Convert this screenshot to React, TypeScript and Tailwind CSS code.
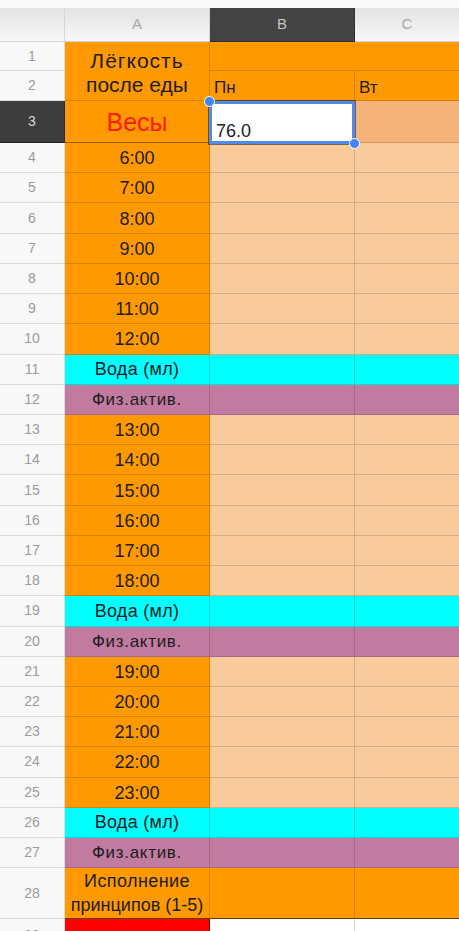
import React from 'react';

type CellProps = {
  bg: string;
  children?: React.ReactNode;
  className?: string;
};

const Cell = ({ bg, children, className = '' }: CellProps) => (
  <div className={`${bg} border-r border-b border-black/15 flex overflow-hidden text-[#1c1c1c] ${className}`}>
    {children}
  </div>
);

const Num = ({ n, dark = false, className = '' }: { n: number; dark?: boolean; className?: string }) => (
  <div
    className={`border-r border-b flex justify-center text-[14px] ${
      dark ? 'bg-[#3d3d3d] text-[#d8d8d8] border-[#2a2a2a]' : 'bg-[#f8f8f8] text-[#9b9b9b] border-[#dcdcdc]'
    } ${className}`}
  >
    {n}
  </div>
);

type Row =
  | { kind: 'time'; label: string }
  | { kind: 'water' }
  | { kind: 'phys' };

const body: Row[] = [
  { kind: 'time', label: '6:00' },
  { kind: 'time', label: '7:00' },
  { kind: 'time', label: '8:00' },
  { kind: 'time', label: '9:00' },
  { kind: 'time', label: '10:00' },
  { kind: 'time', label: '11:00' },
  { kind: 'time', label: '12:00' },
  { kind: 'water' },
  { kind: 'phys' },
  { kind: 'time', label: '13:00' },
  { kind: 'time', label: '14:00' },
  { kind: 'time', label: '15:00' },
  { kind: 'time', label: '16:00' },
  { kind: 'time', label: '17:00' },
  { kind: 'time', label: '18:00' },
  { kind: 'water' },
  { kind: 'phys' },
  { kind: 'time', label: '19:00' },
  { kind: 'time', label: '20:00' },
  { kind: 'time', label: '21:00' },
  { kind: 'time', label: '22:00' },
  { kind: 'time', label: '23:00' },
  { kind: 'water' },
  { kind: 'phys' },
];

export default function App() {
  return (
    <div
      className="w-[459px] h-[931px] overflow-hidden bg-white"
      style={{ fontFamily: '"Liberation Sans", Arial, sans-serif' }}
    >
      {/* top strip */}
      <div className="h-[8px] bg-[#f9f9f9]" />
      {/* column header */}
      <div className="h-[34px] grid grid-cols-[65px_145px_145px_1fr] bg-gradient-to-b from-[#e3e3e3] to-[#f8f8f8]">
        <div className="border-r border-b border-[#d6d6d6]" />
        <div className="border-r border-b border-[#d6d6d6] flex items-center justify-center text-[15px] text-[#a8a8a8]">A</div>
        <div className="border-r border-b border-[#2e2e2e] bg-[#444444] flex items-center justify-center text-[15px] text-[#c4c4c4]">B</div>
        <div className="border-b border-[#d6d6d6] flex items-center justify-center text-[15px] text-[#a8a8a8]">C</div>
      </div>

      <div className="relative grid grid-cols-[65px_145px_145px_1fr] grid-rows-[29px_30px_42px_repeat(24,30.23px)_51px_40px]">
        {/* row 1 & 2 */}
        <Num n={1} className="items-center" />
        <Cell bg="bg-[#ff9900]" className="row-span-2 flex-col items-center justify-start text-[21px] leading-[24px] pt-[7px]">
          <span className="tracking-[1px]">Лёгкость</span>
          <span>после еды</span>
        </Cell>
        <Cell bg="bg-[#ff9900]" className="col-span-2 border-r-0" />
        <Num n={2} className="items-center" />
        <Cell bg="bg-[#ff9900]" className="items-end justify-start pl-[4px] pb-[4px] text-[17px] leading-[17px]">Пн</Cell>
        <Cell bg="bg-[#ff9900]" className="items-end justify-start pl-[4px] pb-[4px] text-[17px] leading-[17px] border-r-0">Вт</Cell>

        {/* row 3 */}
        <Num n={3} dark className="items-center border-b-[#222]" />
        <Cell bg="bg-[#ff9900]" className="items-center justify-center border-b-black/40 text-[25px] text-[#ff1a00] pt-[2px]">Весы</Cell>
        <Cell bg="bg-white" className="items-end justify-start pl-[6px] pb-[2px] text-[18px] leading-[18px] text-[#222]">76.0</Cell>
        <Cell bg="bg-[#f5b27a]" className="border-r-0" />

        {body.map((r, i) => {
          const n = i + 4;
          if (r.kind === 'time') {
            return (
              <React.Fragment key={n}>
                <Num n={n} className="items-center" />
                <Cell bg="bg-[#ff9900]" className="items-center justify-center text-[18px] pt-[2px]">{r.label}</Cell>
                <Cell bg="bg-[#f9cb9c]" />
                <Cell bg="bg-[#f9cb9c]" className="border-r-0" />
              </React.Fragment>
            );
          }
          if (r.kind === 'water') {
            return (
              <React.Fragment key={n}>
                <Num n={n} className="items-center" />
                <Cell bg="bg-[#00ffff]" className="items-center justify-center text-[18px] tracking-[0.3px] pt-[1px]">Вода (мл)</Cell>
                <Cell bg="bg-[#00ffff]" />
                <Cell bg="bg-[#00ffff]" className="border-r-0" />
              </React.Fragment>
            );
          }
          return (
            <React.Fragment key={n}>
              <Num n={n} className="items-center" />
              <Cell bg="bg-[#c27ba0]" className="items-center justify-center text-[17px] tracking-[0.7px] pt-[1px]">Физ.актив.</Cell>
              <Cell bg="bg-[#c27ba0]" />
              <Cell bg="bg-[#c27ba0]" className="border-r-0" />
            </React.Fragment>
          );
        })}

        {/* row 28 */}
        <Num n={28} className="items-center" />
        <Cell bg="bg-[#ff9900]" className="flex-col items-center justify-center text-[18px] leading-[24px] border-b-black/60">
          <span className="tracking-[0.4px]">Исполнение</span>
          <span>принципов (1-5)</span>
        </Cell>
        <Cell bg="bg-[#ff9900]" className="border-b-black/60" />
        <Cell bg="bg-[#ff9900]" className="border-r-0 border-b-black/60" />

        {/* row 29 */}
        <Num n={29} className="items-start pt-[6px]" />
        <Cell bg="bg-[#ff0000]" className="border-r-black/60" />
        <Cell bg="bg-white" className="border-black/10" />
        <Cell bg="bg-white" className="border-black/10 border-r-0" />

        {/* selection overlay */}
        <div className="absolute left-[209px] top-[59px] w-[146px] h-[43px] border-[3px] border-[#4f8be8] ring-1 ring-black/50 pointer-events-none" />
        <div className="absolute left-[204px] top-[54px] w-[11px] h-[11px] rounded-full bg-[#4285f4] border-[1.5px] border-white pointer-events-none" />
        <div className="absolute left-[349px] top-[96px] w-[11px] h-[11px] rounded-full bg-[#4285f4] border-[1.5px] border-white pointer-events-none" />
      </div>
    </div>
  );
}
